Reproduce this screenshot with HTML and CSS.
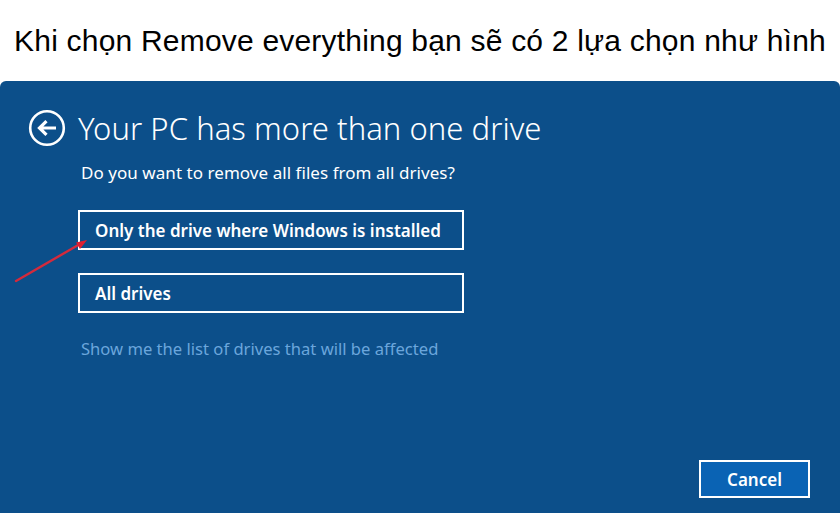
FILE: index.html
```html
<!DOCTYPE html>
<html lang="vi">
<head>
<meta charset="utf-8">
<link rel="stylesheet" href="styles.css">
</head>
<body>
<header class="caption">Khi chọn Remove everything bạn sẽ có 2 lựa chọn như hình</header>
<main class="panel">
  <div class="head">
    <svg class="back" width="38" height="38" viewBox="0 0 38 38">
      <circle cx="19" cy="19" r="16.8" fill="none" stroke="#fff" stroke-width="2.6"/>
      <path d="M28 19H12M18.5 12.2L11.5 19l7 6.8" fill="none" stroke="#fff" stroke-width="3.2" stroke-linecap="butt" stroke-linejoin="miter"/>
    </svg>
    <h1 class="title">Your PC has more than one drive</h1>
  </div>
  <p class="question">Do you want to remove all files from all drives?</p>
  <div class="options">
    <button class="option">Only the drive where Windows is installed</button>
    <button class="option">All drives</button>
  </div>
  <a class="link">Show me the list of drives that will be affected</a>
  <div class="footer">
    <button class="cancel">Cancel</button>
  </div>
  <svg class="pointer" width="100" height="60" viewBox="0 0 100 60">
    <line x1="16" y1="50" x2="80" y2="13" stroke="#d42a3c" stroke-width="2.4" stroke-linecap="round"/>
    <path d="M87 9L76 11.5l4 6.5z" fill="#e01f30"/>
  </svg>
</main>
</body>
</html>
```
FILE: styles.css
```css
html, body {
  margin: 0;
  padding: 0;
  background: #fff;
  width: 840px;
  height: 513px;
  overflow: hidden;
}
.caption {
  height: 81px;
  display: flex;
  align-items: center;
  justify-content: center;
  font-family: "Liberation Sans", Arial, sans-serif;
  font-size: 30px;
  color: #000;
  letter-spacing: 0.2px;
  padding-bottom: 0;
  box-sizing: border-box;
  white-space: nowrap;
}
.panel {
  position: relative;
  height: 432px;
  background: #0c4f8a;
  border-radius: 6px 6px 0 0;
  color: #fff;
  font-family: "Noto Sans", "Open Sans", sans-serif;
  padding: 28px 0 0 0;
  box-sizing: border-box;
  display: flex;
  flex-direction: column;
}
.head {
  display: flex;
  align-items: center;
  padding-left: 28px;
  gap: 12px;
}
.back { flex: none; }
.title {
  margin: 0;
  font-weight: 300;
  font-size: 31px;
  letter-spacing: 0.05px;
  line-height: 38px;
}
.question {
  margin: 15px 0 0 81px;
  font-size: 17px;
  line-height: 22px;
  letter-spacing: 0.05px;
}
.options {
  display: flex;
  flex-direction: column;
  gap: 23px;
  margin: 26px 0 0 78px;
}
.option {
  width: 386px;
  height: 40px;
  border: 2px solid #fff;
  background: transparent;
  color: #fff;
  text-align: left;
  padding: 0 0 0 15px;
  font-family: "Noto Sans", "Open Sans", sans-serif;
  font-weight: 600;
  font-size: 17px;
  box-sizing: border-box;
}
.link {
  margin: 25px 0 0 81px;
  color: #6ba6dc;
  font-size: 16.6px;
  line-height: 22px;
}
.footer {
  margin-top: auto;
  display: flex;
  justify-content: flex-end;
  padding: 0 30px 15px 0;
}
.cancel {
  width: 111px;
  height: 38px;
  background: #0a63b4;
  border: 2px solid #fff;
  color: #fff;
  font-family: "Noto Sans", "Open Sans", sans-serif;
  font-weight: 600;
  font-size: 17px;
  box-sizing: border-box;
}
.pointer {
  position: absolute;
  left: 0;
  top: 150px;
}
```
